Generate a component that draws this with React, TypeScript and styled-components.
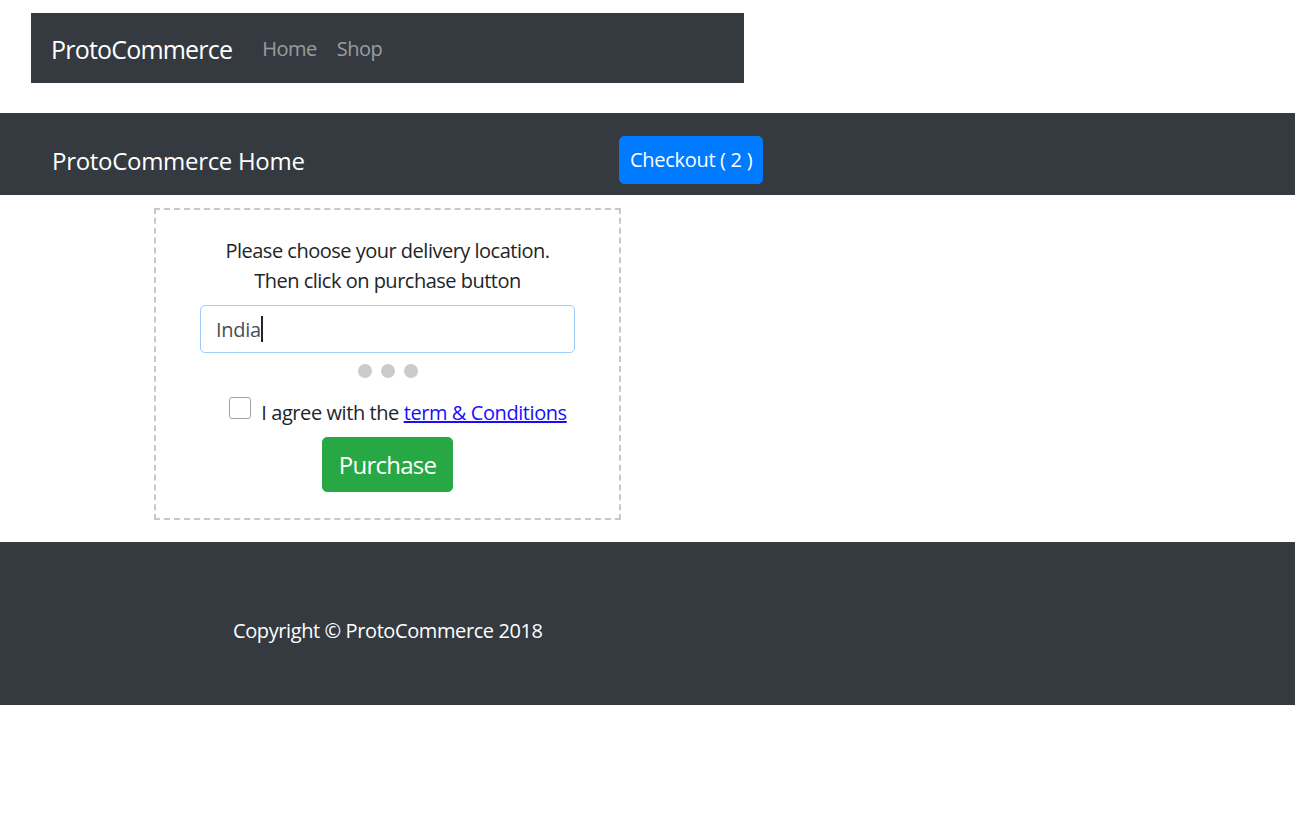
import styled, {createGlobalStyle} from "styled-components";

const GlobalStyle = createGlobalStyle`
    html, body {
        margin: 0;
        padding: 0;
        background: #fff;
        font-family: "Open Sans", "Noto Sans", "Liberation Sans", sans-serif;
        color: #212529;
    }
    * {
        box-sizing: border-box;
    }
`

export default function App() {
    return <Page>
        <GlobalStyle/>
        <TopNav>
            <Brand>ProtoCommerce</Brand>
            <NavLink href="#">Home</NavLink>
            <NavLink href="#">Shop</NavLink>
        </TopNav>

        <Band>
            <BandTitle>ProtoCommerce Home</BandTitle>
            <CheckoutButton>Checkout ( 2 )</CheckoutButton>
        </Band>

        <Main>
            <Card>
                <Message>Please choose your delivery location.<br/>Then click on purchase button</Message>
                <Field role="textbox">
                    <FieldValue>India</FieldValue>
                    <Caret/>
                </Field>
                <Dots>
                    <Dot/>
                    <Dot/>
                    <Dot/>
                </Dots>
                <CheckRow>
                    <CheckBox type="checkbox"/>
                    <CheckLabel>I agree with the <TermsLink href="#">term &amp; Conditions</TermsLink></CheckLabel>
                </CheckRow>
                <PurchaseButton>Purchase</PurchaseButton>
            </Card>
        </Main>

        <Footer>
            <FooterText>Copyright © ProtoCommerce 2018</FooterText>
        </Footer>
    </Page>
}

const Page = styled.div`
    padding-top: 13px;
`

const TopNav = styled.nav`
    margin-left: 31px;
    width: 713px;
    height: 70px;
    background: #343a40;
    display: flex;
    align-items: center;
    padding: 2px 20px 0;
`

const Brand = styled.a`
    font-size: 25px;
    line-height: 37px;
    letter-spacing: -0.8px;
    color: #fff;
    margin-right: 20px;
`

const NavLink = styled.a`
    font-size: 20px;
    line-height: 30px;
    letter-spacing: -0.5px;
    padding: 0 10px;
    color: rgba(255, 255, 255, 0.5);
    text-decoration: none;
`

const Band = styled.header`
    margin-top: 30px;
    height: 82px;
    background: #343a40;
    display: flex;
    align-items: center;
    padding: 12px 0 0 52px;
`

const BandTitle = styled.h1`
    margin: 2px 0 0;
    width: 567px;
    font-size: 24px;
    font-weight: 400;
    line-height: 36px;
    letter-spacing: -0.3px;
    color: #fff;
`

const CheckoutButton = styled.button`
    font-family: inherit;
    font-size: 20px;
    line-height: 30px;
    letter-spacing: -0.3px;
    padding: 8px 10px;
    height: 48px;
    border: 1px solid #007bff;
    border-radius: 5px;
    background: #007bff;
    color: #fff;
`

const Main = styled.main`
    padding: 13px 0 22px 154px;
`

const Card = styled.section`
    width: 467px;
    border: 2px dashed #c8c8c8;
    padding: 26px 0 26px;
    display: flex;
    flex-direction: column;
    align-items: center;
`

const Message = styled.p`
    margin: 0;
    font-size: 20px;
    line-height: 30px;
    letter-spacing: -0.5px;
    text-align: center;
`

const Field = styled.div`
    margin-top: 9px;
    width: 375px;
    height: 48px;
    border: 1px solid #9fcbf8;
    border-radius: 5px;
    display: flex;
    align-items: center;
    padding: 0 15px;
    font-size: 20px;
    letter-spacing: -0.3px;
    color: #495057;
`

const FieldValue = styled.span``

const Caret = styled.span`
    width: 2px;
    height: 26px;
    background: #212529;
`

const Dots = styled.div`
    margin-top: 11px;
    display: flex;
    gap: 9px;
`

const Dot = styled.span`
    width: 14px;
    height: 14px;
    border-radius: 50%;
    background: #cbcbcb;
`

const CheckRow = styled.div`
    margin-top: 20px;
    display: flex;
    align-items: flex-start;
    gap: 10px;
    padding-left: 21px;
`

const CheckBox = styled.input`
    appearance: none;
    margin: -1px 0 0;
    width: 22px;
    height: 22px;
    border: 1px solid #a3a3a3;
    border-radius: 3px;
    background: #fff;
`

const CheckLabel = styled.label`
    font-size: 20px;
    line-height: 30px;
    letter-spacing: -0.42px;
    color: #212529;
`

const TermsLink = styled.a`
    color: #1a0dff;
    text-decoration: underline;
`

const PurchaseButton = styled.button`
    margin-top: 9px;
    height: 55px;
    padding: 0 16px;
    font-family: inherit;
    font-size: 24px;
    letter-spacing: -0.75px;
    border: 1px solid #28a745;
    border-radius: 5px;
    background: #28a745;
    color: #fff;
`

const Footer = styled.footer`
    height: 163px;
    background: #343a40;
    padding: 74px 0 0 233px;
`

const FooterText = styled.p`
    margin: 0;
    font-size: 20px;
    line-height: 30px;
    letter-spacing: -0.4px;
    color: #fff;
`
